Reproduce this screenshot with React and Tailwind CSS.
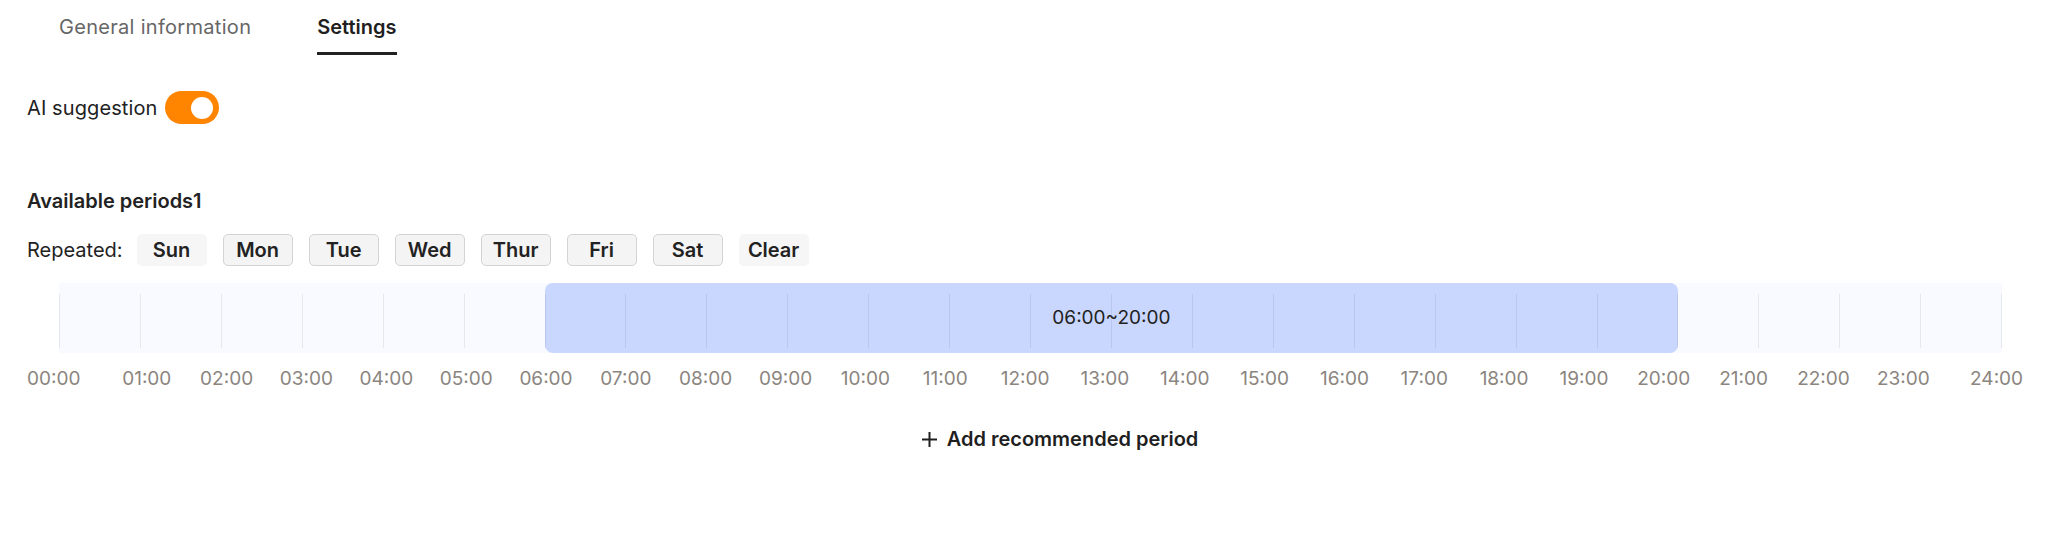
import React from "react";

const days = ["Sun", "Mon", "Tue", "Wed", "Thur", "Fri", "Sat"];
const hours = Array.from({ length: 25 }, (_, i) => `${String(i).padStart(2, "0")}:00`);
const period = { start: 6, end: 20 };

export default function App() {
  return (
    <div className="w-[2050px] h-[545px] bg-white text-[#222] font-['Inter',sans-serif] text-[20px] overflow-hidden">
      {/* Tabs */}
      <div className="flex pl-[59px] gap-[66px]">
        <div className="pt-[15px] pb-[13px] leading-[24px] border-b-[3px] border-transparent text-[#666] tracking-[0.3px]">
          General information
        </div>
        <div className="pt-[15px] pb-[13px] leading-[24px] border-b-[3px] border-[#222] font-semibold text-[#1f1f1f]">
          Settings
        </div>
      </div>

      {/* AI suggestion */}
      <div className="flex items-center gap-[8px] pl-[27px] mt-[36px] h-[33px]">
        <span className="leading-[24px] tracking-[0.1px]">AI suggestion</span>
        <div className="w-[54px] h-[33px] rounded-full bg-[#ff8400] flex items-center justify-end pr-[6px]">
          <div className="w-[22px] h-[22px] rounded-full bg-white" />
        </div>
      </div>

      {/* Available periods */}
      <div className="pl-[27px] mt-[65px] leading-[24px] font-semibold">Available periods1</div>

      <div className="flex items-center pl-[27px] mt-[21px]">
        <span className="leading-[24px] mr-[14px]">Repeated:</span>
        <div className="flex gap-[16px]">
          <button className="w-[70px] h-[32px] rounded-[5px] bg-[#f6f6f6] font-semibold leading-none">Sun</button>
          {days.slice(1).map((d) => (
            <button
              key={d}
              className="w-[70px] h-[32px] rounded-[5px] bg-[#f4f4f4] border border-[#d4d4d4] font-semibold leading-none"
            >
              {d}
            </button>
          ))}
          <button className="w-[70px] h-[32px] rounded-[5px] bg-[#f6f6f6] font-semibold leading-none">Clear</button>
        </div>
      </div>

      {/* Timeline */}
      <div className="relative ml-[59px] mt-[17px] w-[1943px] h-[70px] bg-[#f8faff]">
        <div
          className="absolute top-0 bottom-0 rounded-[8px] bg-[#c9d6fd] flex items-center justify-center"
          style={{
            left: `${(period.start / 24) * 100}%`,
            width: `${((period.end - period.start) / 24) * 100}%`,
          }}
        >
          <span className="relative z-10 text-[19px] leading-[24px] text-[#222]">06:00~20:00</span>
        </div>
        <div className="absolute inset-0 pt-[11px] pb-[5px] flex pointer-events-none">
          {Array.from({ length: 24 }).map((_, i) => (
            <div
              key={i}
              className={`flex-1 border-l border-[rgba(0,0,40,0.07)] ${i === 23 ? "border-r" : ""}`}
            />
          ))}
        </div>
      </div>

      {/* Hour labels */}
      <div className="flex ml-[27px] w-[1996px] mt-[14px] text-[19px] leading-[24px] text-[#8b8580]">
        {hours.map((h, i) => (
          <div
            key={h}
            className={`flex-1 ${i === 0 ? "text-left" : i === 24 ? "text-right" : "text-center"}`}
          >
            {h}
          </div>
        ))}
      </div>

      {/* Add recommended period */}
      <div className="flex justify-center pl-[70px] mt-[36px]">
        <button className="flex items-center gap-[10px] font-semibold leading-[24px] text-[#1f1f1f]">
          <svg width="15" height="15" viewBox="0 0 15 15" fill="none" stroke="#1f1f1f" strokeWidth="2">
            <path d="M7.5 0v15M0 7.5h15" />
          </svg>
          Add recommended period
        </button>
      </div>
    </div>
  );
}
